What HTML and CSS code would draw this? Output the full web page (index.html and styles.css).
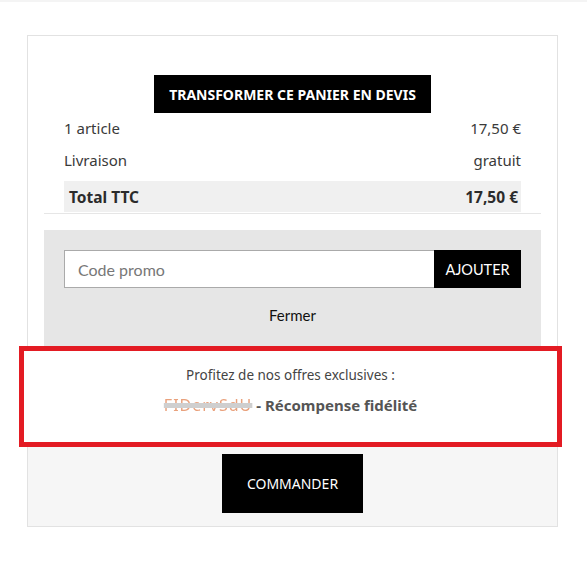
FILE: index.html
```html
<!DOCTYPE html>
<html lang="fr">
<head>
<meta charset="utf-8">
<title>Panier</title>
<link rel="stylesheet" href="styles.css">
</head>
<body>
<div class="topline"></div>
<div class="card">
  <div class="top">
    <button class="btn-devis">TRANSFORMER CE PANIER EN DEVIS</button>
  </div>
  <div class="summary">
    <div class="rows">
      <div class="row"><span>1 article</span><span>17,50 €</span></div>
      <div class="row"><span>Livraison</span><span>gratuit</span></div>
      <div class="row total"><span>Total TTC</span><span>17,50 €</span></div>
    </div>
  </div>
  <div class="promo-wrap">
    <div class="promo">
      <div class="promo-form">
        <input class="promo-input" type="text" placeholder="Code promo">
        <button class="btn-add">AJOUTER</button>
      </div>
      <div class="close">Fermer</div>
    </div>
  </div>
  <div class="lower">
    <div class="offer">
      <p class="offer-title">Profitez de nos offres exclusives :</p>
      <p class="offer-line"><span class="code">FIDervSdU</span> - Récompense fidélité</p>
    </div>
    <div class="order">
      <button class="btn-order">COMMANDER</button>
    </div>
  </div>
</div>
</body>
</html>
```
FILE: styles.css
```css
* { box-sizing: border-box; }
body {
  margin: 0;
  background: #fff;
  font-family: "Noto Sans", "Open Sans", sans-serif;
  color: #333;
}
.topline { height: 2px; background: #f4f4f4; }
.card {
  margin: 33px 0 0 27px;
  width: 531px;
  border: 1px solid #e2e2e2;
  background: #fff;
}
.top {
  display: flex;
  justify-content: center;
  padding-top: 39px;
}
.btn-devis {
  height: 38px;
  width: 277px;
  background: #000;
  color: #fff;
  border: 0;
  font-family: "Noto Sans", sans-serif;
  font-weight: 700;
  font-size: 14px;
  padding: 0;
}
.summary { padding: 0 16px; }
.rows {
  padding: 0 20px 1px;
  border-bottom: 1px solid #e6e6e6;
}
.row {
  display: flex;
  justify-content: space-between;
  align-items: center;
  height: 32px;
  font-size: 15px;
  color: #3a3a3a;
}
.row:first-child { height: 30px; }
.row:nth-child(2) { height: 34px; }
.row.total {
  margin-top: 4px;
  height: 31px;
  background: #f0f0f0;
  padding: 0 3px 0 5px;
  font-weight: 700;
  font-size: 15.5px;
  color: #2b2b2b;
}
.promo-wrap { padding: 16px 16px 0; }
.promo {
  background: #e6e6e6;
  padding: 20px 20px 0;
  height: 117px;
}
.promo-form { display: flex; height: 38px; }
.promo-input {
  flex: 1;
  border: 1px solid #aaa;
  border-right: 0;
  background: #fff;
  font-family: "Lato", sans-serif;
  font-size: 16px;
  padding: 0 13px;
  color: #333;
}
.promo-input::placeholder { color: #777; }
.btn-add {
  width: 87px;
  background: #000;
  color: #fff;
  border: 0;
  font-family: "Lato", sans-serif;
  font-size: 14.5px;
  padding: 0;
}
.close {
  text-align: center;
  font-family: "Lato", sans-serif;
  font-size: 15px;
  color: #111;
  margin-top: 18px;
}
.lower {
  background: #f6f6f6;
  padding-bottom: 13px;
}
.offer {
  margin: -1px -5px 0 -9px;
  height: 101px;
  border: 5px solid #e31b23;
  background: #fff;
  text-align: center;
  padding-top: 15px;
}
.offer-title {
  margin: 0;
  font-size: 13.5px;
  color: #444;
}
.offer-line {
  margin: 10px 0 0;
  font-size: 15px;
  font-weight: 700;
  color: #555;
}
.code {
  display: inline-block;
  color: #e9a17c;
  font-weight: 400;
  font-size: 16px;
  letter-spacing: 1px;
  filter: blur(0.6px);
  text-decoration: line-through;
  text-decoration-color: #cfcfcf;
  text-decoration-thickness: 5px;
}
.order {
  display: flex;
  justify-content: center;
  padding-top: 7px;
}
.btn-order {
  width: 141px;
  height: 59px;
  background: #000;
  color: #fff;
  border: 0;
  font-family: "Noto Sans", sans-serif;
  font-size: 14px;
  padding: 0;
}
```
